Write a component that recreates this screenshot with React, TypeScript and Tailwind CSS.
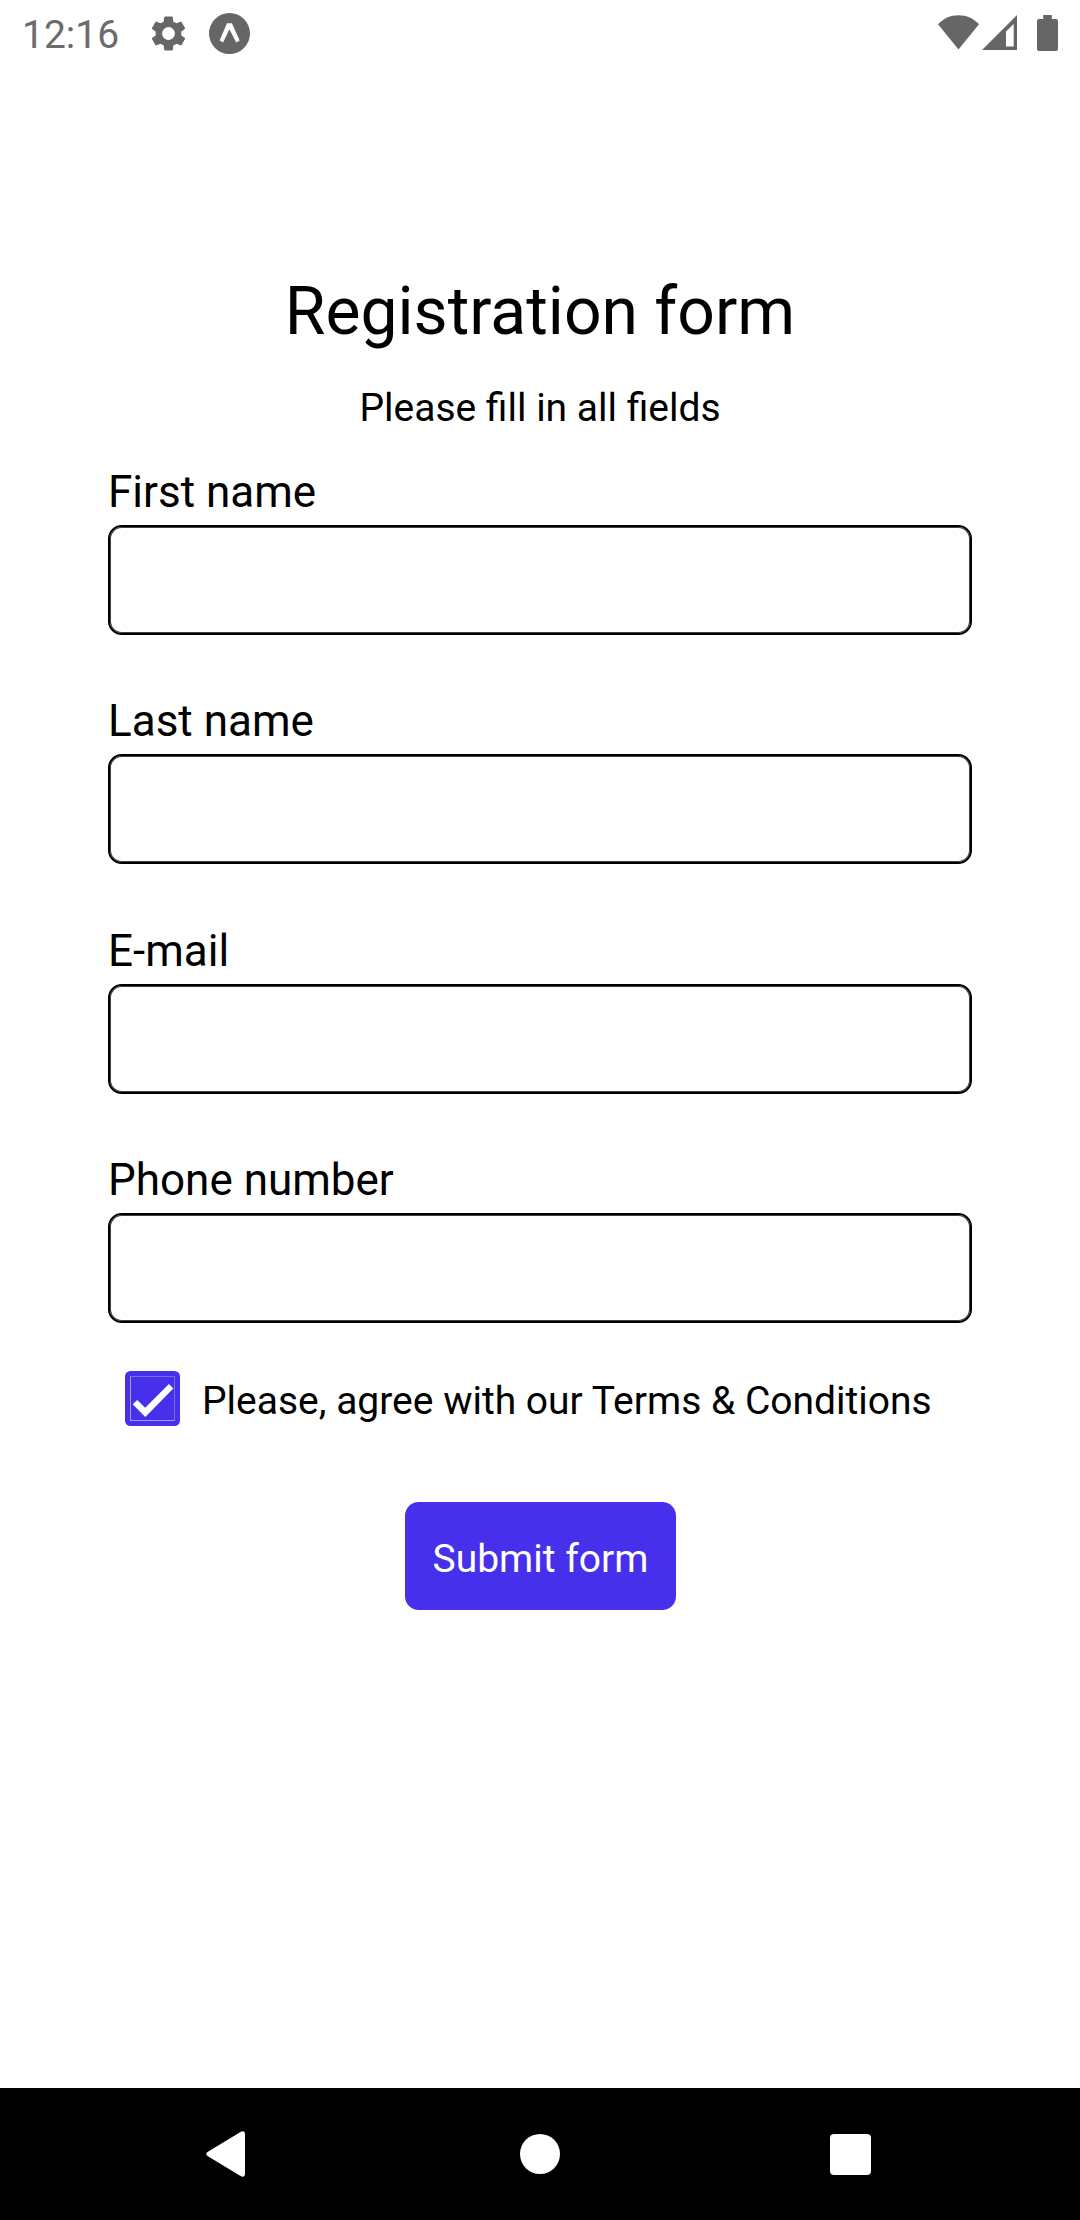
import React, { useState } from "react";

function StatusBar() {
  return (
    <header className="flex h-[66px] shrink-0 items-start justify-between text-[#666666]">
      <div className="flex items-start">
        <span className="ml-[22px] mt-[12px] w-[126px] text-[39px] leading-[46px] text-[#6b6b6b]">12:16</span>
        <svg className="mt-[13px] h-[41px] w-[41px]" viewBox="0 0 24 24" fill="currentColor">
          <path d="M19.43 12.98c.04-.32.07-.64.07-.98s-.03-.66-.07-.98l2.11-1.65c.19-.15.24-.42.12-.64l-2-3.46c-.12-.22-.39-.3-.61-.22l-2.49 1c-.52-.4-1.08-.73-1.69-.98l-.38-2.65C14.46 2.18 14.25 2 14 2h-4c-.25 0-.46.18-.49.42l-.38 2.65c-.61.25-1.17.59-1.69.98l-2.49-1c-.23-.09-.49 0-.61.22l-2 3.46c-.13.22-.07.49.12.64l2.11 1.65c-.04.32-.07.65-.07.98s.03.66.07.98l-2.11 1.65c-.19.15-.24.42-.12.64l2 3.46c.12.22.39.3.61.22l2.490-1c.52.4 1.080.73 1.690.98l.38 2.650c.03.24.24.42.49.42h4c.25 0 .46-.18.49-.42l.38-2.650c.61-.25 1.170-.59 1.690-.98l2.490 1c.23.09.49 0 .61-.22l2-3.460c.12-.22.07-.49-.12-.64l-2.110-1.650zM12 15.750a3.750 3.750 0 1 1 0-7.500 3.750 3.750 0 0 1 0 7.500z" />
        </svg>
        <svg className="ml-[20px] mt-[13px] h-[41px] w-[41px]" viewBox="0 0 41 41">
          <circle cx="20.5" cy="20.5" r="20.5" fill="currentColor" />
          <path d="M18 10.3h4.900L30.700 27.600l-3.500 1.800L20.400 16.300 14.100 29.400l-3.500-1.800z" fill="#fff" />
        </svg>
      </div>
      <div className="flex items-start">
        <svg className="mt-[15px] h-[35px] w-[41px]" viewBox="0 0 41 35" fill="currentColor">
          <path d="M0 9.3C5.5 3.3 12.5.2 20.5.2S35.500 3.300 41 9.300L20.500 34.500z" />
        </svg>
        <svg className="ml-[3px] mt-[15px] h-[35px] w-[35px]" viewBox="0 0 35 35" fill="currentColor">
          <path fillRule="evenodd" d="M35 0v35H0zM31.700 9L24 16.500V31.500h7.700z" />
        </svg>
        <svg className="ml-[20px] mr-[22px] mt-[15px] h-[36px] w-[21px]" viewBox="0 0 21 36" fill="currentColor">
          <path d="M6.200 0h8.600v4h4.200a2 2 0 0 1 2 2v28a2 2 0 0 1-2 2H2a2 2 0 0 1-2-2V6a2 2 0 0 1 2-2h4.200z" />
        </svg>
      </div>
    </header>
  );
}

function Field({ label, type }: { label: string; type: string }) {
  return (
    <label className="block">
      <span className="block text-[44px] leading-[52px]">{label}</span>
      <input
        type={type}
        className="mt-[7px] block h-[110px] w-full rounded-[13.75px] border-2 border-black bg-white px-7 text-[39px] shadow-[inset_0_0_0_1px_#404040] outline-none"
      />
    </label>
  );
}

function NavigationBar() {
  return (
    <nav className="flex h-[132px] shrink-0 items-center bg-black text-white">
      <svg className="ml-[206px] h-[46px] w-[39px]" viewBox="0 0 39 46" fill="currentColor">
        <path d="M1.500 21L34.500.9Q39-1 39 3.500v39q0 4.500-4.500 2.600L1.500 25Q-1 23 1.500 21z" />
      </svg>
      <span className="ml-[275px] h-10 w-10 rounded-full bg-white" />
      <span className="ml-[270px] mt-[1px] h-[41px] w-[41px] rounded-[4px] bg-white" />
    </nav>
  );
}

export default function App() {
  const [agreed, setAgreed] = useState(true);
  return (
    <div className="flex h-[2220px] w-[1080px] flex-col bg-white font-[Roboto,sans-serif] text-black">
      <StatusBar />
      <main className="flex flex-1 flex-col px-[108px] pt-[207px]">
        <h1 className="text-center text-[66px] leading-[78px]">Registration form</h1>
        <p className="mt-[34px] text-center text-[39px] leading-[46px]">Please fill in all fields</p>
        <div className="mt-[35px] flex flex-col gap-[60.33px]">
          <Field label="First name" type="text" />
          <Field label="Last name" type="text" />
          <Field label="E-mail" type="email" />
          <Field label="Phone number" type="tel" />
        </div>
        <div className="ml-[17px] mt-[48px] flex h-[55px] items-center">
          <button
            type="button"
            role="checkbox"
            aria-checked={agreed}
            aria-label="Agree"
            onClick={() => setAgreed(!agreed)}
            className="flex h-[55px] w-[55px] items-center justify-center rounded-[5.5px] bg-[#4630eb]"
          >
            <span className="flex h-[45px] w-[45px] border border-b-[#a59af5] border-l-[#a59af5] border-r-[#7a6af0] border-t-[#7a6af0]">
              {agreed && (
                <svg className="h-[43px] w-[43px]" viewBox="0 0 43 43" fill="#fff">
                  <path d="M1.700 27.300L6.200 23l8 7.700L38 7l4.300 4.600L14.300 40z" />
                </svg>
              )}
            </span>
          </button>
          <span className="ml-[22px] mt-[5px] whitespace-nowrap text-[39px] leading-[46px]">
            Please, agree with our Terms &amp; Conditions
          </span>
        </div>
        <button
          type="button"
          className="ml-[297px] mt-[76px] h-[108px] w-[271px] rounded-[13.75px] bg-[#4630eb] pt-[6px] text-[39px] leading-[46px] text-white"
        >
          Submit form
        </button>
      </main>
      <NavigationBar />
    </div>
  );
}
